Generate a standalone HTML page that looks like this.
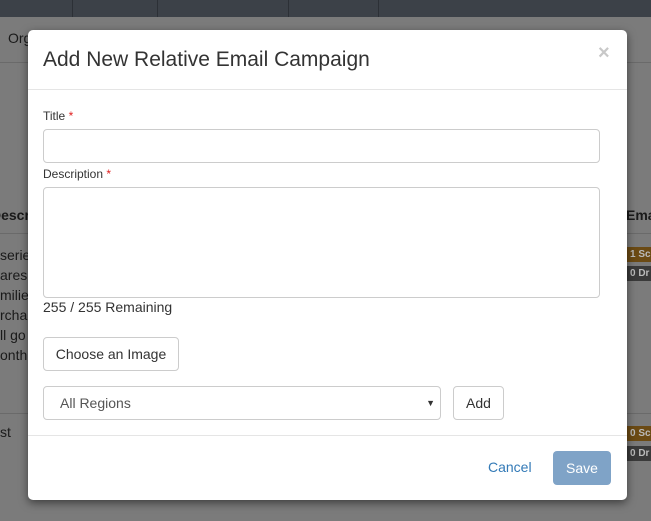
<!DOCTYPE html>
<html><head><style>
body{margin:0;width:651px;height:521px;overflow:hidden;background:#7b7b7b;font-family:"Liberation Sans",sans-serif;position:relative}
.a{position:absolute;white-space:nowrap}
.nav{left:0;top:0;width:651px;height:17px;background:#3c4148}
.bg{color:#1a1a1a;font-size:14px}
.badge{font-size:10px;font-weight:bold;color:#bbb;padding:1px 4px;height:13px;line-height:13px;width:30px;overflow:hidden}
.modal{left:28px;top:30px;width:599px;height:470px;background:#fff;border-radius:5px;box-shadow:0 3px 9px rgba(0,0,0,.5)}
.in{border:1px solid #ccc;border-radius:4px;box-sizing:border-box;background:#fff}
.lbl{font-size:12px;color:#333}
.lbl b{color:#e02020;font-weight:normal}
</style></head><body>
<div class="a nav"></div>
<div class="a" style="left:72px;top:0;width:1px;height:17px;background:#2c3036"></div>
<div class="a" style="left:157px;top:0;width:1px;height:17px;background:#2c3036"></div>
<div class="a" style="left:288px;top:0;width:1px;height:17px;background:#2c3036"></div>
<div class="a" style="left:378px;top:0;width:1px;height:17px;background:#2c3036"></div>
<div class="a bg" style="left:8px;top:30px">Org</div>
<div class="a" style="left:0;top:62px;width:651px;height:1px;background:#6a6a6a"></div>
<div class="a bg" style="left:-9px;top:207px;font-weight:bold">Descri</div>
<div class="a bg" style="left:626px;top:207px;font-weight:bold">Ema</div>
<div class="a" style="left:0;top:233px;width:651px;height:1px;background:#6a6a6a"></div>
<div class="a bg" style="left:0;top:245px;line-height:20px">serie<br>ares<br>milie<br>rcha<br>ll go<br>onthl</div>
<div class="a" style="left:0;top:413px;width:651px;height:1px;background:#6a6a6a"></div>
<div class="a bg" style="left:0;top:424px">st</div>
<div class="a badge" style="left:626px;top:247px;background:#6b4a14">1 Sc</div>
<div class="a badge" style="left:626px;top:266px;background:#3a3a3a">0 Dr</div>
<div class="a badge" style="left:626px;top:426px;background:#6b4a14">0 Sc</div>
<div class="a badge" style="left:626px;top:446px;background:#3a3a3a">0 Dr</div>

<div class="a modal">
 <div class="a" style="left:15px;top:18px;font-size:21px;color:#333">Add New Relative Email Campaign</div>
 <div class="a" style="left:570px;top:12px;font-size:20px;font-weight:bold;color:#c8c8c8">×</div>
 <div class="a" style="left:0;top:59px;width:599px;height:1px;background:#e5e5e5"></div>
 <div class="a lbl" style="left:15px;top:79px">Title <b>*</b></div>
 <div class="a in" style="left:15px;top:99px;width:557px;height:34px"></div>
 <div class="a lbl" style="left:15px;top:137px">Description <b>*</b></div>
 <div class="a in" style="left:15px;top:157px;width:557px;height:111px"></div>
 <div class="a" style="left:15px;top:269px;font-size:14px;color:#333">255 / 255 Remaining</div>
 <div class="a in" style="left:15px;top:307px;width:136px;height:34px;font-size:14px;color:#333;line-height:32px;text-align:center">Choose an Image</div>
 <div class="a in" style="left:15px;top:356px;width:398px;height:34px;font-size:14px;color:#555;line-height:32px;padding-left:16px">All Regions<span style="position:absolute;right:5px;font-size:9px;color:#333">▼</span></div>
 <div class="a in" style="left:425px;top:356px;width:51px;height:34px;font-size:14px;color:#333;line-height:32px;text-align:center">Add</div>
 <div class="a" style="left:0;top:405px;width:599px;height:1px;background:#e5e5e5"></div>
 <div class="a" style="left:460px;top:429px;font-size:14px;color:#337ab7">Cancel</div>
 <div class="a" style="left:525px;top:421px;width:58px;height:34px;background:#7fa3c7;border-radius:4px;color:#fff;font-size:14px;line-height:34px;text-align:center">Save</div>
</div>
</body></html>
